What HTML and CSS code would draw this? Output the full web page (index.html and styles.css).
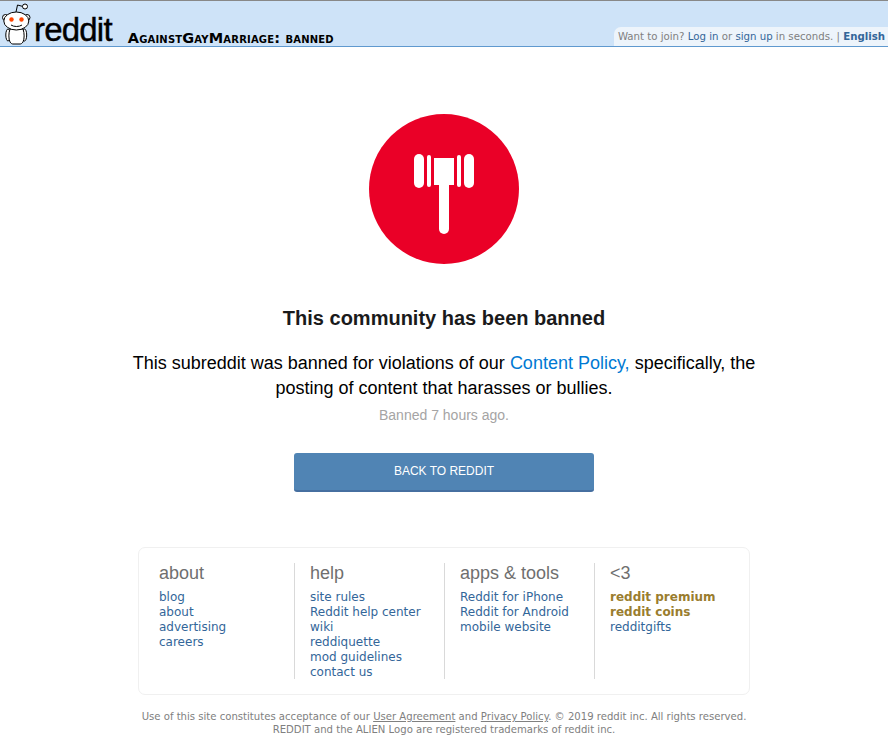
FILE: index.html
```html
<!DOCTYPE html>
<html lang="en">

<head>
    <meta charset="UTF-8">
    <meta name="viewport" content="width=device-width, initial-scale=1.0">
    <title>AgainstGayMarriage: banned</title>
    <link rel="stylesheet" href="styles.css">
</head>

<body>
    <header class="header">
        <a class="logo" href="#">
            <svg class="alien" width="31" height="43" viewBox="0 0 31 43">
                <g fill="#fff" stroke="#000" stroke-width="1">
                    <path d="M15 10l1.500-7 5.500 1.500" fill="none" />
                    <circle cx="24" cy="4.500" r="2.500" />
                    <circle cx="4.500" cy="15.500" r="3" />
                    <circle cx="26" cy="15.500" r="3" />
                    <ellipse cx="7" cy="33" rx="2.200" ry="6" />
                    <ellipse cx="23.500" cy="33" rx="2.200" ry="6" />
                    <path d="M9 27h13c1.500 4 1.500 10 0 13-1 1.500-2 2-3 2h-7c-1 0-2-.5-3-2-1.500-3-1.500-9 0-13z" />
                    <ellipse cx="15.300" cy="19" rx="12.500" ry="9" />
                </g>
                <circle cx="10.500" cy="17.500" r="2.200" fill="#ff4500" />
                <circle cx="20.500" cy="17.500" r="2.200" fill="#ff4500" />
                <path d="M10 23c3 2 8 2 11 0" fill="none" stroke="#000" stroke-width="1" />
            </svg>
            <span class="wordmark">reddit</span>
        </a>
        <span class="pagename">AgainstGayMarriage: banned</span>
        <div class="userbar">
            Want to join? <a href="#">Log in</a> or <a href="#">sign up</a> in seconds.
            <span class="sep">|</span> <a class="lang" href="#">English</a>
        </div>
    </header>

    <main class="content">
        <div class="badge">
            <svg class="gavel" width="60" height="80" viewBox="0 0 60 80">
                <g fill="#fff">
                    <rect x="0" y="0" width="10" height="34" rx="5" />
                    <rect x="13" y="1" width="4" height="32" rx="2" />
                    <rect x="20" y="4" width="20" height="27" />
                    <rect x="43" y="1" width="4" height="32" rx="2" />
                    <rect x="50" y="0" width="10" height="34" rx="5" />
                    <rect x="25" y="20" width="10" height="60" rx="5" />
                </g>
            </svg>
        </div>
        <h1 class="title">This community has been banned</h1>
        <p class="message">This subreddit was banned for violations of our <a href="#">Content Policy,</a> <span>specifically, the</span><br>posting of content that harasses or bullies.</p>
        <p class="when">Banned 7 hours ago.</p>
        <a class="back" href="#">BACK TO REDDIT</a>
    </main>

    <footer class="footer">
        <div class="columns">
            <div class="col">
                <h2>about</h2>
                <a href="#">blog</a>
                <a href="#">about</a>
                <a href="#">advertising</a>
                <a href="#">careers</a>
            </div>
            <div class="col">
                <h2>help</h2>
                <a href="#">site rules</a>
                <a href="#">Reddit help center</a>
                <a href="#">wiki</a>
                <a href="#">reddiquette</a>
                <a href="#">mod guidelines</a>
                <a href="#">contact us</a>
            </div>
            <div class="col">
                <h2>apps &amp; tools</h2>
                <a href="#">Reddit for iPhone</a>
                <a href="#">Reddit for Android</a>
                <a href="#">mobile website</a>
            </div>
            <div class="col">
                <h2>&lt;3</h2>
                <a class="gold" href="#">reddit premium</a>
                <a class="gold" href="#">reddit coins</a>
                <a href="#">redditgifts</a>
            </div>
        </div>
        <p class="legal">Use of this site constitutes acceptance of our <a href="#">User Agreement</a> and <a href="#">Privacy Policy</a>. &copy; 2019 reddit inc. All rights reserved.<br>REDDIT and the ALIEN Logo are registered trademarks of reddit inc.</p>
    </footer>
</body>

</html>
```

FILE: styles.css
```css
body {
    margin: 0;
    background-color: #fff;
    font-family: "DejaVu Sans", Verdana, sans-serif;
    font-size: 12px;
}

a {
    text-decoration: none;
}

.header {
    height: 45px;
    display: flex;
    align-items: flex-end;
    background-color: #cee3f8;
    border-top: 1px solid #888;
    border-bottom: 1px solid #5f99cf;
}

.logo {
    display: flex;
    align-items: flex-end;
    margin-left: 1px;
    color: #000;
}

.alien {
    display: block;
    margin-bottom: 1px;
}

.wordmark {
    font-family: "Liberation Sans", Arial, sans-serif;
    font-size: 33px;
    line-height: 33px;
    margin-left: 2px;
    letter-spacing: -0.8px;
    -webkit-text-stroke: 0.4px #000;
}

.pagename {
    margin-left: 16px;
    font-size: 14.500px;
    line-height: 16px;
    font-weight: bold;
    font-variant: small-caps;
    color: #000;
    letter-spacing: 0.180px;
}

.userbar {
    margin-left: auto;
    height: 19px;
    padding: 0 3px 0 4px;
    line-height: 20px;
    font-size: 10.200px;
    color: #808080;
    background-color: #edf4fb;
    border-top-left-radius: 7px;
    white-space: nowrap;
}

.userbar a {
    color: #369;
}

.userbar .lang {
    font-weight: bold;
}

.sep {
    color: #808080;
}

.content {
    display: flex;
    flex-direction: column;
    align-items: center;
    font-family: "Liberation Sans", Arial, sans-serif;
    color: #1a1a1b;
}

.badge {
    width: 150px;
    height: 150px;
    margin-top: 67px;
    display: flex;
    align-items: center;
    justify-content: center;
    border-radius: 50%;
    background-color: #ea0027;
}

.gavel {
    margin-top: 10px;
}

.title {
    margin: 41px 0 0;
    font-size: 20px;
    line-height: 26px;
    font-weight: bold;
}

.message {
    width: 640px;
    margin: 20px 0 0;
    font-size: 18px;
    line-height: 25px;
    text-align: center;
    color: #000;
}

.message a {
    color: #0079d3;
}

.when {
    margin: 4px 0 0;
    font-size: 14px;
    line-height: 20px;
    color: #a5a4a4;
}

.back {
    width: 300px;
    height: 37px;
    margin-top: 28px;
    line-height: 37px;
    text-align: center;
    font-size: 12px;
    color: #fff;
    background-color: #5084b4;
    border-bottom: 2px solid #466fa0;
    border-radius: 3px;
}

.footer {
    width: 612px;
    margin: 55px auto 0;
}

.columns {
    display: flex;
    box-sizing: border-box;
    height: 148px;
    padding: 15px 0;
    border: 1px solid #f0f0f0;
    border-radius: 7px;
}

.col {
    display: flex;
    flex-direction: column;
    width: 150px;
    padding-left: 15px;
    box-sizing: border-box;
    border-left: 1px solid #d9d9d9;
}

.col:first-child {
    width: 155px;
    padding-left: 20px;
    border-left: none;
}

.col:last-child {
    flex: 1;
}

.col h2 {
    margin: 1px 0 7px;
    font-family: "Liberation Sans", Arial, sans-serif;
    font-size: 18px;
    line-height: 19px;
    font-weight: normal;
    color: #6f6f6f;
}

.col a {
    line-height: 15px;
    color: #336699;
}

.col .gold {
    font-weight: bold;
    color: #9a7d2e;
}

.legal {
    margin: 15px -10px 0;
    font-size: 10.100px;
    line-height: 13px;
    text-align: center;
    color: #808080;
}

.legal a {
    color: #808080;
    text-decoration: underline;
}
```
